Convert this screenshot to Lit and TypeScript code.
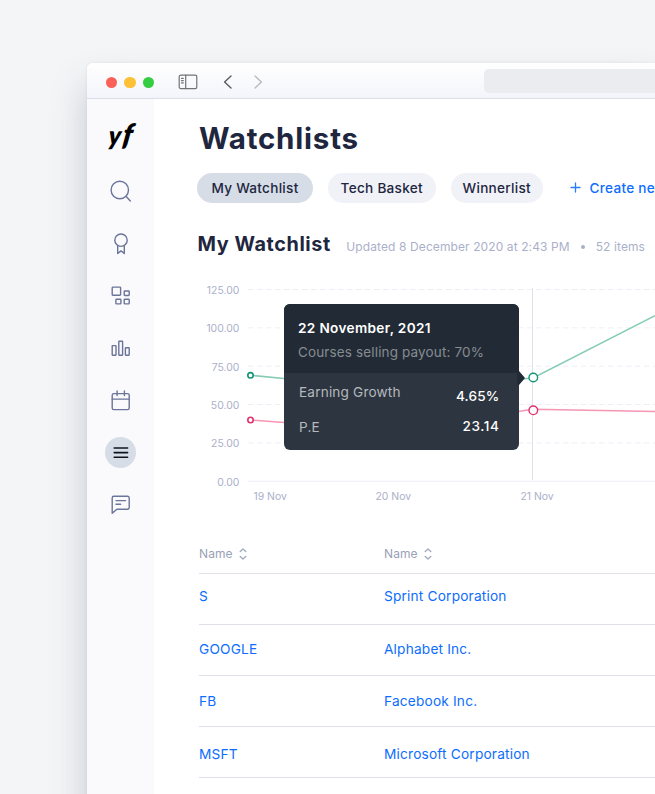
import { LitElement, html, css, svg } from "lit";
import { customElement } from "lit/decorators.js";

const NAV = [
  { name: "Search", icon: svg`<circle cx="14.8" cy="14" r="8.7"/><path d="M21.2 20.6l4.1 4.3"/>` },
  { name: "Awards", icon: svg`<circle cx="16" cy="12.2" r="6.2"/><path d="M12.7 17.8v7.7l3.3-2.6 3.3 2.6v-7.7"/>` },
  { name: "Dashboard", icon: svg`<rect x="7.2" y="7.1" width="8.4" height="8.2" rx=".7"/><rect x="19.2" y="11" width="5" height="4.5" rx=".7"/><rect x="10.9" y="19.2" width="5" height="4.7" rx=".7"/><rect x="19.2" y="19.2" width="5" height="4.7" rx=".7"/>` },
  { name: "Statistics", icon: svg`<rect x="7.2" y="12.6" width="3.8" height="9.6" rx=".4"/><rect x="13.8" y="8.3" width="3.8" height="13.9" rx=".4"/><rect x="20.4" y="14.8" width="3.8" height="7.4" rx=".4"/>` },
  { name: "Calendar", icon: svg`<rect x="7.2" y="8.6" width="17" height="16" rx="1.6"/><path d="M7.2 14.1h17M12.1 6v4.6M19.4 6v4.6"/>` },
  { name: "Watchlists", active: true, icon: svg`<path d="M9.2 11h13.4M9.2 15.6h13.4M9.2 20.2h13.4"/>` },
  { name: "Messages", icon: svg`<path d="M8.8 7.3h13.8a1.6 1.6 0 0 1 1.6 1.6v9.7a1.6 1.6 0 0 1-1.6 1.6H11.9l-4.7 4.1V8.9a1.6 1.6 0 0 1 1.6-1.6zM11 11.6h9.6M11 15.3h4.6"/>` },
];

@customElement("browser-bar")
class BrowserBar extends LitElement {
  static styles = css`
    :host { display: flex; align-items: center; height: 35px; box-sizing: content-box; border-bottom: 1px solid #dcdde6; background: linear-gradient(#fff, #f4f5fb); border-radius: 6px 0 0 0; }
    .lights { display: flex; gap: 7.4px; margin: 4px 0 0 18.5px; }
    .dot { width: 11.4px; height: 11.4px; border-radius: 50%; }
    .red { background: #fa6158; }
    .amber { background: #fdc036; }
    .green { background: #36cd43; }
    svg { display: block; flex: none; fill: none; stroke-linecap: round; stroke-linejoin: round; }
    .panel { margin: 3px 0 0 24px; stroke: #737377; stroke-width: 1.2; }
    .back { margin: 3px 0 0 25px; stroke: #5d5d61; stroke-width: 1.4; }
    .next { margin: 3px 0 0 20px; stroke: #b9babf; stroke-width: 1.4; }
    .address { margin: 1px 0 0 221px; flex: 1; height: 24px; border-radius: 5px 0 0 5px; background: #ebecef; }
  `;
  render() {
    return html`
      <div class="lights"><span class="dot red"></span><span class="dot amber"></span><span class="dot green"></span></div>
      <svg class="panel" width="20" height="16" viewBox="0 0 20 16"><rect x="1.2" y="1.2" width="17.6" height="13.4" rx="1.6"/><path d="M7.7 1.2v13.4M3.5 4.3h1.8M3.5 6.6h1.8M3.5 8.9h1.8"/></svg>
      <svg class="back" width="10" height="14" viewBox="0 0 10 14"><path d="M8 .9L1.6 7 8 13.1"/></svg>
      <svg class="next" width="10" height="14" viewBox="0 0 10 14"><path d="M2 .9L8.4 7 2 13.1"/></svg>
      <div class="address"></div>`;
  }
}

@customElement("side-nav")
class SideNav extends LitElement {
  static styles = css`
    :host { display: flex; flex-direction: column; align-items: center; flex: none; width: 67px; background: #fafafc; }
    .logo { display: block; width: 67px; height: 66px; font-family: Lato, sans-serif; font-weight: 800; font-style: italic; fill: #000; }
    .item { display: flex; align-items: center; justify-content: center; height: 52.3px; }
    .disc { width: 31px; height: 31px; border-radius: 50%; }
    .active { background: #d6dde7; }
    .icon { display: block; fill: none; stroke: #6b7499; stroke-width: 1.4; stroke-linecap: round; stroke-linejoin: round; }
    .active .icon { stroke: #10131a; stroke-width: 1.6; }
  `;
  render() {
    return html`
      <svg class="logo" viewBox="0 0 67 66">
        <text transform="translate(20.8 45.6) skewX(-6) scale(.94 1)" font-size="26.5">y</text>
        <text transform="translate(34.4 46) skewX(-9) scale(.96 1)" font-size="29.5">f</text>
      </svg>
      ${NAV.map((n) => html`<div class="item"><div class="disc ${n.active ? "active" : ""}" role="img" aria-label=${n.name}>
        <svg class="icon" width="31" height="31" viewBox="0 0 31 31">${n.icon}</svg></div></div>`)}`;
  }
}

const LEVELS = ["125.00", "100.00", "75.00", "50.00", "25.00", "0.00"];
const DAYS = [
  { x: 99.5, label: "19 Nov" },
  { x: 221.5, label: "20 Nov" },
  { x: 366.5, label: "21 Nov" },
];

@customElement("watch-chart")
class WatchChart extends LitElement {
  static styles = css`
    :host { display: block; position: relative; height: 240px; }
    .plot { display: block; width: 501px; height: 240px; }
    .label { font-size: 10.4px; fill: #abb0ca; }
    .grid { stroke: #eeeff6; stroke-width: 1; stroke-dasharray: 5.5 3.5; }
    .axis { stroke: #eeeff8; stroke-width: 1.2; }
    .cursor { stroke: #dfe0e9; stroke-width: 1; }
    .line { fill: none; stroke-width: 1.5; }
    .teal { stroke: #87cbb7; }
    .pink { stroke: #f596b3; }
    .pt { fill: #fff; }
    .pt-teal { stroke: #149477; }
    .pt-pink { stroke: #e0316b; }
    .tip { position: absolute; left: 130px; top: 29px; width: 235px; height: 146px; border-radius: 6px; background: #2d3640; color: #fff; }
    .tip-head { box-sizing: border-box; height: 69px; padding: 14px 14px 0; border-radius: 6px 6px 0 0; background: #222b35; }
    .date { font-size: 13.6px; line-height: 20px; font-weight: 600; letter-spacing: 0.35px; }
    .sub { font-size: 13.5px; line-height: 20px; margin-top: 4px; color: #868b92; letter-spacing: 0.14px; }
    .pair { display: flex; justify-content: space-between; padding: 0 19.5px 0 15px; font-size: 13.6px; line-height: 20px; letter-spacing: 0.18px; }
    .first { padding-top: 9px; }
    .second { padding-top: 15px; }
    .key { color: #b5b9be; }
    .val { font-weight: 500; }
    .first .val { margin-top: 4px; margin-bottom: -4px; }
    .second .val { margin-top: -1px; letter-spacing: 0.6px; }
    .arrow { position: absolute; right: -6px; top: 67px; width: 8px; height: 14px; background: #222b35; clip-path: polygon(0 0, 25% 0, 100% 50%, 25% 100%, 0 100%); }
  `;
  render() {
    return html`
      <svg class="plot" viewBox="0 0 501 240">
        ${LEVELS.map((l, i) => svg`
          <text class="label" x="85.3" y=${18.8 + i * 38.35} text-anchor="end">${l}</text>
          <line class=${i === 5 ? "axis" : "grid"} x1="94" x2="501" y1=${14.5 + i * 38.35} y2=${14.5 + i * 38.35}/>`)}
        ${DAYS.map((d) => svg`<text class="label" x=${d.x} y="225">${d.label}</text>`)}
        <line class="cursor" x1="378.5" x2="378.5" y1="13" y2="205"/>
        <path class="line teal" d="M96.5 100.3L130 103.4 260 110 362 104.4 379 103 501 40.6"/>
        <path class="line pink" d="M96.5 145L130 147.4 260 152 364 136.4 379 134.2 501 136.4"/>
        <circle class="pt pt-teal" cx="96.5" cy="100.3" r="2.7" stroke-width="1.6"/>
        <circle class="pt pt-pink" cx="96.5" cy="145" r="2.7" stroke-width="1.6"/>
        <circle class="pt pt-teal" cx="379.3" cy="102.5" r="4.3" stroke-width="1.4"/>
        <circle class="pt pt-pink" cx="379.3" cy="135.3" r="4.3" stroke-width="1.4"/>
      </svg>
      <div class="tip">
        <div class="tip-head"><div class="date">22 November, 2021</div><div class="sub">Courses selling payout: 70%</div></div>
        <div class="pair first"><span class="key">Earning Growth</span><span class="val">4.65%</span></div>
        <div class="pair second"><span class="key">P.E</span><span class="val">23.14</span></div>
        <div class="arrow"></div>
      </div>`;
  }
}

const STOCKS = [
  ["S", "Sprint Corporation"],
  ["GOOGLE", "Alphabet Inc."],
  ["FB", "Facebook Inc."],
  ["MSFT", "Microsoft Corporation"],
];

@customElement("stock-table")
class StockTable extends LitElement {
  static styles = css`
    :host { display: block; margin-left: 45px; }
    .row { display: grid; grid-template-columns: 185px 1fr; box-sizing: border-box; height: 51px; border-bottom: 1px solid #e0e0ea; font-size: 13.7px; letter-spacing: 0.18px; line-height: 20px; color: #0d6dfd; padding-top: 12px; }
    .row:nth-child(3) { padding-top: 14px; }
    .row:nth-child(4) { padding-top: 15px; }
    .row:nth-child(5) { padding-top: 17px; }
    .head { height: 59px; padding-top: 29px; font-size: 12px; letter-spacing: 0.1px; color: #9a9fb8; }
    .cell { display: flex; align-items: center; gap: 6.5px; height: 20px; }
    .sort { display: block; fill: none; stroke: #a6abc2; stroke-width: 1.4; stroke-linecap: round; stroke-linejoin: round; }
  `;
  render() {
    const sort = html`<svg class="sort" width="8" height="12" viewBox="0 0 8 12"><path d="M1.2 3.6L4 1l2.8 2.6M1.2 8.4L4 11l2.8-2.6"/></svg>`;
    return html`
      <div class="row head"><div class="cell">Name ${sort}</div><div class="cell">Name ${sort}</div></div>
      ${STOCKS.map(([s, n]) => html`<div class="row"><span>${s}</span><span>${n}</span></div>`)}`;
  }
}

@customElement("app-root")
class AppRoot extends LitElement {
  static styles = css`
    :host { display: block; box-sizing: border-box; width: 100%; height: 794px; padding: 63px 0 0 87px; overflow: hidden; background: #f4f5f7; font-family: Inter, "Liberation Sans", sans-serif; white-space: nowrap; }
    .window { height: 860px; border-radius: 6px 0 0 0; background: #fff; box-shadow: 0 22px 36px rgba(60, 75, 105, 0.26), 0 0 3px rgba(60, 75, 105, 0.1); }
    .body { display: flex; height: 824px; }
    .main { flex: 1; min-width: 0; overflow: hidden; color: #21263f; }
    .title { margin: 21px 0 0 45px; font-size: 29.5px; line-height: 36px; font-weight: 700; letter-spacing: 0.8px; }
    .tabs { display: flex; align-items: center; margin: 16.5px 0 0 43px; height: 30px; font-size: 13.6px; font-weight: 500; letter-spacing: 0.27px; }
    .tab { display: flex; flex: none; align-items: center; justify-content: center; height: 30px; border-radius: 15px; background: #f1f2f8; margin-right: 15px; }
    .t0 { width: 116px; background: #d6dde7; }
    .t1 { width: 107.5px; }
    .t2 { width: 92.5px; }
    .create { display: flex; flex: none; align-items: center; gap: 9px; margin-left: 11.5px; color: #0d6dfd; }
    .plus { display: block; fill: none; stroke: #2a7dfd; stroke-width: 1.3; stroke-linecap: round; }
    .sub { display: flex; align-items: baseline; margin: 28.5px 0 0 43.5px; height: 44px; }
    .name { font-size: 19.8px; line-height: 26px; font-weight: 700; letter-spacing: 0.6px; }
    .meta { display: flex; align-items: baseline; margin-left: 15.5px; font-size: 12px; letter-spacing: 0.1px; color: #abb0ca; }
    .bullet { width: 4px; height: 4px; border-radius: 50%; background: #abb0ca; margin: 0 11px; transform: translateY(-2px); }
  `;
  render() {
    return html`
      <div class="window">
        <browser-bar></browser-bar>
        <div class="body">
          <side-nav></side-nav>
          <div class="main">
            <div class="title">Watchlists</div>
            <div class="tabs">
              <div class="tab t0">My Watchlist</div><div class="tab t1">Tech Basket</div><div class="tab t2">Winnerlist</div>
              <div class="create"><svg class="plus" width="11" height="11" viewBox="0 0 11 11"><path d="M5.5 1v9M1 5.5h9"/></svg>Create new</div>
            </div>
            <div class="sub"><div class="name">My Watchlist</div><div class="meta"><span>Updated 8 December 2020 at 2:43 PM</span><i class="bullet"></i><span>52 items</span></div></div>
            <watch-chart></watch-chart>
            <stock-table></stock-table>
          </div>
        </div>
      </div>`;
  }
}
